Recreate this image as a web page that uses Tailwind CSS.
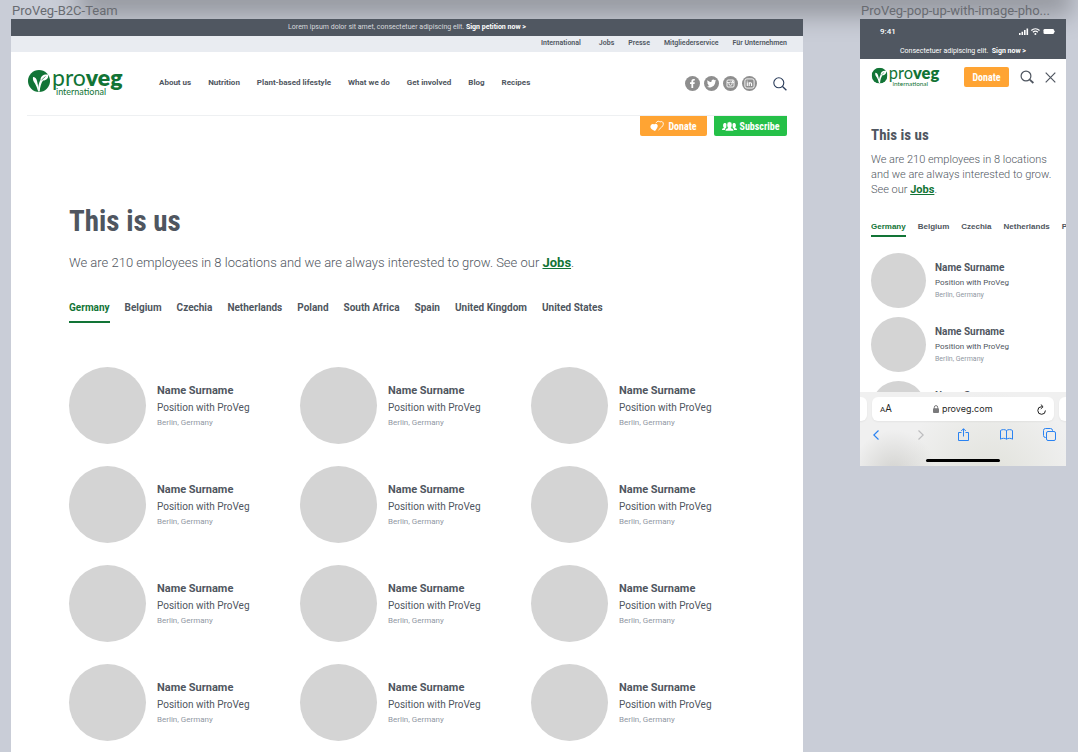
<!DOCTYPE html>
<html lang="en">
<head>
<meta charset="utf-8">
<meta name="viewport" content="width=device-width, initial-scale=1">
<title>ProVeg team page</title>
<script src="https://cdn.jsdelivr.net/npm/@tailwindcss/browser@4"></script>
</head>
<body class="relative flex h-screen items-start gap-[57px] overflow-hidden bg-[#c9cdd7] pl-[11px] pr-3 font-[Roboto,sans-serif] text-[#4f5660]">

<svg class="hidden" aria-hidden="true">
  <symbol id="leaf" viewBox="0 0 44 44">
    <circle cx="22" cy="22" r="22" fill="#127436"/>
    <path fill="#fff" d="M20 43C20 32 22 25 25 20C25 12 31 8 40 9C42 16 37 21 30 21C26 27 24 34 23.500 43Z"/>
    <path fill="#fff" d="M10 14C14 14 17 17 18 22L21.500 38L19.500 41C18 34 16 31 14 27C11 23 9 19 10 14Z"/>
    <path fill="none" stroke="#127436" stroke-width="1.400" d="M27 20L35 13"/>
  </symbol>
  <symbol id="magnifier" viewBox="0 0 14 14">
    <circle cx="5.800" cy="5.800" r="5" fill="none" stroke="currentColor" stroke-width="1.100"/>
    <path d="M9.500 9.500L13.400 13.200" fill="none" stroke="currentColor" stroke-width="1.300"/>
  </symbol>
</svg>

<div class="absolute -top-3 right-[18px] left-[90px] h-3 shadow-[0_4px_24px_12px_rgba(0,0,0,0.26)]"></div>

<section class="relative min-w-0 flex-1">
  <h2 class="h-[19px] pt-[3px] pl-px text-[13px] leading-[15px] text-[#686b71]">ProVeg-B2C-Team</h2>
  <div class="h-screen bg-white">
    <p class="h-[17px] bg-[#505761] pl-2 pr-2 text-center text-[7px] leading-[16px] text-[#d8dade]">Lorem ipsum dolor sit amet, consectetuer adipiscing elit. <a href="#" class="font-bold text-white">Sign petition now &gt;</a></p>
    <nav aria-label="Secondary" class="flex h-4 justify-end gap-[14px] bg-[#e9ecf1] pr-4 text-[7px] leading-[15px] font-semibold">
      <a href="#" class="mr-1">International</a><a href="#">Jobs</a><a href="#">Presse</a><a href="#">Mitgliederservice</a><a href="#">Für Unternehmen</a>
    </nav>
    <header class="mx-4 flex h-16 items-start border-b border-[#eef0f2] pt-[17px]">
      <a href="#" aria-label="ProVeg International" class="flex">
        <svg class="h-7 w-24 overflow-visible" viewBox="0 0 96 28">
          <use href="#leaf" x="1" y="1" width="22" height="22"/>
          <text x="25" y="17" font-family="Lato, sans-serif" font-size="23" fill="#127436">pro<tspan font-weight="800">veg</tspan></text>
          <text x="29" y="26" font-family="Lato, sans-serif" font-size="9" fill="#127436">international</text>
        </svg>
      </a>
      <nav aria-label="Main" class="ml-9 flex gap-[17px] pt-2 text-[8px] leading-[12px] font-bold whitespace-nowrap">
        <a href="#">About us</a><a href="#">Nutrition</a><a href="#">Plant-based lifestyle</a><a href="#">What we do</a><a href="#">Get involved</a><a href="#">Blog</a><a href="#">Recipes</a>
      </nav>
      <div class="ml-auto flex items-center gap-1 pt-[7px] text-[#8e8e8e]">
        <a href="#" aria-label="Facebook"><svg class="size-[15px]" viewBox="0 0 15 15"><circle cx="7.500" cy="7.500" r="7.500" fill="currentColor"/><path fill="#fff" d="M6.400 12V8H5V6.300h1.400V5.200C6.400 3.700 7.300 3 8.600 3h1.200v1.600h-.8c-.6 0-.8.3-.8.8v.9h1.600L9.500 8H8.200v4Z"/></svg></a>
        <a href="#" aria-label="Twitter"><svg class="size-[15px]" viewBox="0 0 15 15"><circle cx="7.500" cy="7.500" r="7.500" fill="currentColor"/><path fill="#fff" d="M3.500 4.200c1 1.100 2.300 1.800 3.900 1.900C7.200 4.500 8.200 3.600 9.300 3.600c.6 0 1.100.2 1.400.6l1.200-.5-.7 1.100 1-.2-.9 1c0 3.400-2.400 5.800-5.300 5.800-1.100 0-2.200-.3-3-.9 1 .1 2-.2 2.700-.8-.9 0-1.500-.6-1.700-1.300h.8C3.900 8.100 3.300 7.400 3.300 6.400l.8.2C3.300 6 3 5.100 3.500 4.200Z"/></svg></a>
        <a href="#" aria-label="Instagram"><svg class="size-[15px]" viewBox="0 0 15 15"><circle cx="7.500" cy="7.500" r="7.500" fill="currentColor"/><rect x="4" y="4" width="7" height="7" rx="1" fill="none" stroke="#fff" stroke-width=".9"/><path stroke="#fff" stroke-width=".8" d="M4 6.500h2M9 6.500h2"/><circle cx="7.500" cy="7.700" r="1.600" fill="none" stroke="#fff" stroke-width=".9"/><rect x="8.800" y="4.600" width="1.500" height="1.300" fill="#fff"/></svg></a>
        <a href="#" aria-label="LinkedIn"><svg class="size-[15px]" viewBox="0 0 15 15"><circle cx="7.500" cy="7.500" r="7.500" fill="currentColor"/><rect x="2.900" y="2.900" width="9.200" height="9.200" rx="2" fill="none" stroke="#fff" stroke-width=".9"/><path stroke="#fff" stroke-width="1.100" fill="none" d="M5.300 6.300v3.700M5.300 4.700v.9M7.200 10V6.300M7.200 7.600c.3-1 2.400-1.300 2.400.3V10"/></svg></a>
        <button type="button" aria-label="Search" class="ml-3 text-[#2a3c5a]"><svg class="size-[14px]"><use href="#magnifier"/></svg></button>
      </div>
    </header>
    <div class="mx-4 flex justify-end gap-[7px] font-['Roboto_Condensed',Roboto,sans-serif] text-[10px] font-bold text-white">
      <button type="button" class="flex h-5 w-[67px] items-center justify-center gap-1 rounded-b-xs bg-[#ffa433]"><svg class="h-3 w-[14px]" viewBox="0 0 14 12"><path fill="none" stroke="#fff" stroke-width=".9" d="M6 3C7 1 9 .6 10 2C11.500.8 13.700 2 13.300 4.300C13 6.500 10.500 8 8.500 10"/><path fill="#fff" d="M4 4.500C5.500 2.800 8 4 7.700 6.200C7.500 8 6 9.500 5 11C3 10 .8 9 .4 7.200C0 5 2.500 3.300 4 4.500Z"/></svg>Donate</button>
      <button type="button" class="flex h-5 w-[73px] items-center justify-center gap-[3px] rounded-b-xs bg-[#25c048]"><svg class="h-[10px] w-[15px]" viewBox="0 0 15 10" fill="#fff"><path d="M0 9c0-1.300.6-1.700 2-2C1.300 6 .9 4.800 1.200 3.400 1.500 1.400 4.300 1.400 4.600 3.400L4.300 6.500C3.400 7 3 8 3 9ZM15 9c0-1.300-.6-1.700-2-2 .7-1 1.100-2.200.8-3.600-.3-2-3.100-2-3.400 0l.3 3.100C11.600 7 12 8 12 9Z"/><path stroke="#25c048" stroke-width=".5" d="M3.300 10C3.300 8 4.300 7.500 6 7 5.200 6 4.800 4.500 5.100 3 5.400 0 9.600 0 9.900 3c.3 1.500-.1 3-.9 4 1.700.5 2.700 1 2.700 3Z"/></svg>Subscribe</button>
    </div>
    <main class="pt-[65px] pr-[41px] pl-[58px]">
      <h1 class="font-['Roboto_Condensed',Roboto,sans-serif] text-[29px] leading-10 font-bold">This is us</h1>
      <p class="mt-3 text-[13px] leading-5 font-light">We are 210 employees in 8 locations and we are always interested to grow. See our <a href="#" class="font-bold text-[#127436] underline">Jobs</a>.</p>
      <div role="tablist" aria-label="Countries" class="mt-7 flex gap-[15px] text-[10px] leading-[14px] font-bold whitespace-nowrap">
        <button type="button" role="tab" aria-selected="true" class="border-b-2 border-[#127436] pb-[6px] text-[#127436]">Germany</button>
        <button type="button" role="tab" class="self-start">Belgium</button>
        <button type="button" role="tab" class="self-start">Czechia</button>
        <button type="button" role="tab" class="self-start">Netherlands</button>
        <button type="button" role="tab" class="self-start">Poland</button>
        <button type="button" role="tab" class="self-start">South Africa</button>
        <button type="button" role="tab" class="self-start">Spain</button>
        <button type="button" role="tab" class="self-start">United Kingdom</button>
        <button type="button" role="tab" class="self-start">United States</button>
      </div>
      <ul id="team" class="mt-11 grid grid-cols-3 gap-y-[22px]">
        <li class="flex items-center gap-[11px]">
          <div class="size-[77px] shrink-0 rounded-full bg-[#d4d4d4]"></div>
          <div>
            <h3 class="text-[11px] leading-[17px] font-bold">Name Surname</h3>
            <p class="text-[10px] leading-[17px]">Position with ProVeg</p>
            <p class="text-[8px] leading-[13px] text-[#9198a3]">Berlin, Germany</p>
          </div>
        </li>
      </ul>
    </main>
  </div>
</section>

<section class="relative w-[206px] shrink-0">
  <h2 class="h-[19px] pt-[3px] pl-px text-[13px] leading-[15px] whitespace-nowrap text-[#686b71]">ProVeg-pop-up-with-image-pho...</h2>
  <div class="relative h-[447px] overflow-hidden bg-white">
    <div class="h-10 bg-[#505761] text-white">
      <div class="flex h-[25px] items-center justify-between pr-[11px] pl-5 text-[8px] font-medium">
        <span>9:41</span>
        <svg class="h-[7px] w-9" viewBox="0 0 36 7" fill="#fff"><path d="M0 5h1.600v2H0ZM2.500 3.800h1.600V7H2.500ZM5 2h1.600v5H5ZM7.500.5h1.600V7H7.500Z"/><path fill="none" stroke="#fff" stroke-width="1.200" d="M12.300 2.500C14.700.3 18.100.3 20.500 2.500M13.900 4.300c1.400-1.300 3.600-1.300 5 0"/><circle cx="16.400" cy="6" r="1"/><rect x="24.500" y="1" width="10.500" height="5" rx="1.300"/><rect x="35.300" y="2.700" width=".7" height="1.600"/></svg>
      </div>
      <p class="text-center text-[7px] leading-[14px]">Consectetuer adipiscing elit.&nbsp; <a href="#" class="font-bold">Sign now &gt;</a></p>
    </div>
    <header class="flex h-9 items-center pr-[10px] pl-[11px]">
      <a href="#" aria-label="ProVeg International"><svg class="h-5 w-[70px] overflow-visible" viewBox="0 0 96 28">
        <use href="#leaf" x="0" y="1" width="22" height="22"/>
        <text x="24" y="17" font-family="Lato, sans-serif" font-size="23" fill="#127436">pro<tspan font-weight="800">veg</tspan></text>
        <text x="29" y="26" font-family="Lato, sans-serif" font-size="9" fill="#127436">international</text>
      </svg></a>
      <button type="button" class="mr-[11px] ml-auto h-5 w-[45px] rounded-xs bg-[#ffa433] font-['Roboto_Condensed',Roboto,sans-serif] text-[10px] font-bold text-white">Donate</button>
      <button type="button" aria-label="Search" class="mr-[11px]"><svg class="size-[14px]" viewBox="0 0 14 14"><circle cx="6" cy="6" r="4.900" fill="none" stroke="currentColor" stroke-width="1.200"/><path stroke="currentColor" stroke-width="1.800" d="M9.700 9.700L13.400 13"/></svg></button>
      <button type="button" aria-label="Close"><svg class="size-[11px]" viewBox="0 0 11 11"><path stroke="currentColor" stroke-width="1.200" d="M.7.7l9.600 9.600M10.300.7L.7 10.300"/></svg></button>
    </header>
    <main class="pt-[29px] pl-[11px]">
      <h1 class="font-['Roboto_Condensed',Roboto,sans-serif] text-[15px] leading-[22px] font-bold">This is us</h1>
      <p class="mt-[6px] pr-2 text-[11px] leading-[15px] font-light">We are 210 employees in 8 locations and we are always interested to grow. See our <a href="#" class="font-bold text-[#127436] underline">Jobs</a>.</p>
      <div role="tablist" aria-label="Countries" class="mt-6 flex gap-3 overflow-hidden font-['Liberation_Sans',sans-serif] text-[8px] leading-[12px] font-bold whitespace-nowrap">
        <button type="button" role="tab" aria-selected="true" class="border-b-2 border-[#127436] pb-[2px] text-[#127436]">Germany</button>
        <button type="button" role="tab" class="self-start">Belgium</button>
        <button type="button" role="tab" class="self-start">Czechia</button>
        <button type="button" role="tab" class="self-start">Netherlands</button>
        <button type="button" role="tab" class="self-start">Poland</button>
      </div>
      <ul id="team-mobile" class="mt-4 flex flex-col gap-[9px]">
        <li class="flex items-center gap-[9px]">
          <div class="size-[55px] shrink-0 rounded-full bg-[#d4d4d4]"></div>
          <div>
            <h3 class="text-[10px] leading-[16px] font-bold">Name Surname</h3>
            <p class="text-[8px] leading-[13px]">Position with ProVeg</p>
            <p class="text-[7px] leading-[12px] text-[#9198a3]">Berlin, Germany</p>
          </div>
        </li>
      </ul>
    </main>
    <div class="absolute inset-x-0 bottom-0 h-[74px] overflow-hidden bg-[#f0f0f0] bg-[radial-gradient(circle_at_34px_80px,#d3d3d0_0,transparent_42px),radial-gradient(circle_at_130px_90px,#e0e1da_0,transparent_90px)] pt-[5px] text-[#1f1f1f]">
      <div class="-mx-6 flex gap-[5px]">
        <div class="h-6 w-[31px] shrink-0 rounded-md bg-white shadow-xs"></div>
        <div class="flex h-6 min-w-0 flex-1 items-center rounded-md bg-white px-2 shadow-xs">
          <button type="button" aria-label="Text size" class="text-[8px] leading-none">A<span class="text-[10px]">A</span></button>
          <svg class="ml-auto h-2 w-[6px] shrink-0" viewBox="0 0 6 8" fill="#7a7a7c"><rect y="3.300" width="6" height="4.700" rx=".9"/><path fill="none" stroke="#7a7a7c" d="M1.300 4V2.300a1.700 1.700 0 0 1 3.400 0V4"/></svg>
          <input type="text" aria-label="Address" value="proveg.com" class="ml-[3px] w-[54px] bg-transparent font-[Inter,sans-serif] text-[9px]">
          <button type="button" aria-label="Reload" class="ml-auto"><svg class="h-[11px] w-[9px]" viewBox="0 0 9 11" fill="none" stroke="currentColor"><path d="M5.500 2.700H4.500a3.800 3.800 0 1 0 3.900 3.800M3.800.5l2.300 2.200-2.300 2.200"/></svg></button>
        </div>
        <div class="h-6 w-[31px] shrink-0 rounded-md bg-white shadow-xs"></div>
      </div>
      <div class="flex items-center justify-between pt-[7px] pr-[10px] pl-[13px] text-[#2a83f2]">
        <button type="button" aria-label="Back"><svg class="h-[10px] w-[6px]" viewBox="0 0 6 10" fill="none" stroke="currentColor" stroke-width="1.200"><path d="M5.500.5L.8 5l4.700 4.500"/></svg></button>
        <button type="button" aria-label="Forward" disabled class="ml-2 text-[#bcbcbe]"><svg class="h-[10px] w-[6px]" viewBox="0 0 6 10" fill="none" stroke="currentColor" stroke-width="1.200"><path d="M.5.5L5.200 5 .5 9.500"/></svg></button>
        <button type="button" aria-label="Share" class="ml-1"><svg class="h-[13px] w-[11px]" viewBox="0 0 11 13" fill="none" stroke="currentColor"><path d="M3.500 4.500H.5v8h10v-8h-3M5.500 8.500V.8M3.200 3L5.500.7 7.800 3"/></svg></button>
        <button type="button" aria-label="Bookmarks"><svg class="h-[11px] w-[13px]" viewBox="0 0 13 11" fill="none" stroke="currentColor"><path d="M6.500 1.500C5 .3 2 .3.500 1.500v8.700C2 9 5 9 6.500 10.200 8 9 11 9 12.500 10.200V1.500C11 .3 8 .3 6.500 1.500Zm0 0v8.700"/></svg></button>
        <button type="button" aria-label="Tabs"><svg class="size-[13px]" viewBox="0 0 13 13" fill="none" stroke="currentColor"><path d="M3.500 9.500h-1a2 2 0 0 1-2-2v-5a2 2 0 0 1 2-2h5a2 2 0 0 1 2 2v1"/><rect x="3.500" y="3.500" width="9" height="9" rx="1.500"/></svg></button>
      </div>
      <div class="mx-auto mt-[18px] h-[3px] w-[74px] rounded-full bg-black"></div>
    </div>
  </div>
</section>

<script>
  // Fill each team list with copies of its first member.
  for (const [id, total] of [["team", 12], ["team-mobile", 3]]) {
    const list = document.getElementById(id);
    const card = list.firstElementChild;
    for (let i = 1; i < total; i++) list.append(card.cloneNode(true));
  }
</script>
</body>
</html>
